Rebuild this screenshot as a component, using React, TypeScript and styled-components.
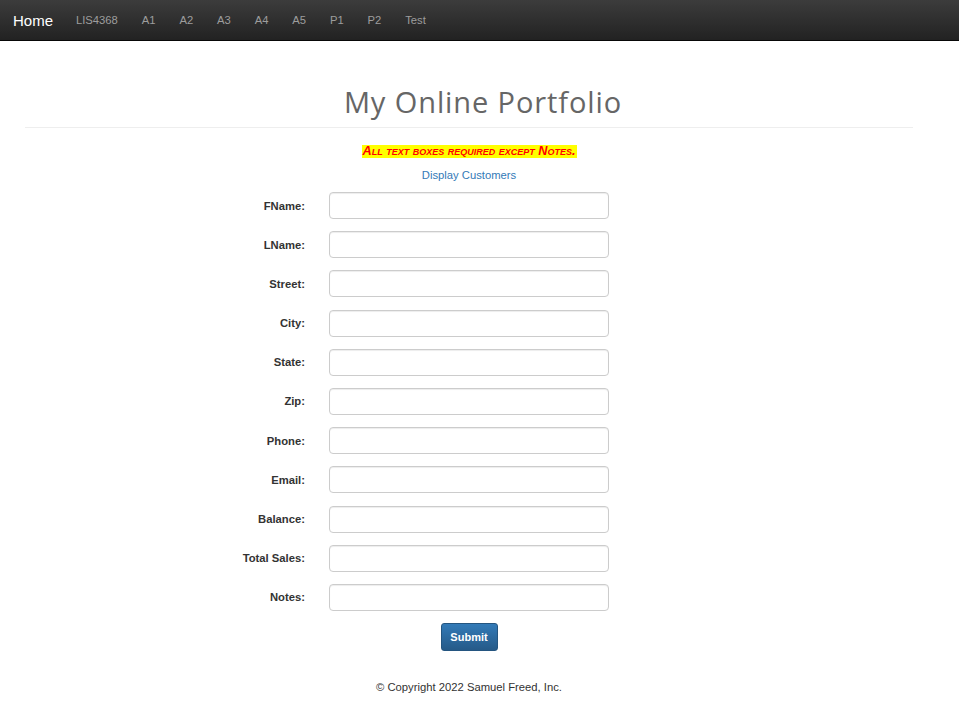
import React from "react";
import styled, { createGlobalStyle } from "styled-components";

const Global = createGlobalStyle`
  html, body { margin: 0; padding: 0; background: #fff; }
  body { font-family: "Liberation Sans", Arial, sans-serif; font-size: 11.25px; color: #333; }
  * { box-sizing: border-box; }
`;

const Navbar = styled.nav`
  height: 41px;
  background: linear-gradient(to bottom, #3c3c3c 0%, #222 100%);
  border-bottom: 1px solid #080808;
  display: flex;
  align-items: center;
  padding-left: 13px;
`;

const Brand = styled.a`
  color: #fff;
  font-size: 15px;
  margin-right: 11px;
  text-decoration: none;
`;

const NavLink = styled.a`
  color: #9d9d9d;
  font-size: 11.25px;
  padding: 0 11.95px;
  text-decoration: none;
`;

const Container = styled.main`
  margin: 0 46px 0 25px;
  display: flex;
  flex-direction: column;
  align-items: center;
`;

const Title = styled.h1`
  font-family: "Open Sans", "DejaVu Sans", sans-serif;
  font-weight: 400;
  font-size: 29px;
  letter-spacing: 0.9px;
  color: #666;
  margin: 41px 0 0 0;
  padding-left: 28px;
  line-height: 40px;
`;

const Rule = styled.hr`
  align-self: stretch;
  border: 0;
  border-top: 1px solid #eee;
  margin: 5px 0 0 0;
`;

const Warning = styled.p`
  margin: 17px 0 0 0;
  background: #ff0;
  color: #f00;
  font-weight: bold;
  font-style: italic;
  font-variant: small-caps;
  font-size: 12.7px;
  line-height: 13px;
  padding: 0 1px;
`;

const LinkText = styled.a`
  margin-top: 10px;
  color: #337ab7;
  font-size: 11.25px;
  text-decoration: none;
  line-height: 14px;
`;

const Form = styled.form`
  align-self: stretch;
  margin-top: 10px;
  display: grid;
  grid-template-columns: 1fr 280px 1fr;
  column-gap: 24px;
  row-gap: 12.2px;
  align-items: center;
`;

const Label = styled.label`
  grid-column: 1;
  justify-self: end;
  font-weight: bold;
  font-size: 11.25px;
  color: #333;
`;

const Input = styled.input`
  grid-column: 2;
  height: 27px;
  width: 280px;
  border: 1px solid #ccc;
  border-radius: 4px;
  box-shadow: inset 0 1px 1px rgba(0, 0, 0, 0.075);
  font-family: inherit;
  padding: 4px 8px;
`;

const ButtonCell = styled.div`
  grid-column: 2;
  display: flex;
  justify-content: center;
`;

const Submit = styled.button`
  width: 57px;
  height: 28px;
  border: 1px solid #245580;
  border-radius: 3px;
  background: linear-gradient(to bottom, #337ab7 0%, #265a88 100%);
  color: #fff;
  font-family: inherit;
  font-weight: bold;
  font-size: 11px;
  padding: 0;
`;

const Footer = styled.footer`
  margin-top: 29px;
  font-size: 11.25px;
  color: #333;
  line-height: 14px;
`;

const fields = [
  "FName",
  "LName",
  "Street",
  "City",
  "State",
  "Zip",
  "Phone",
  "Email",
  "Balance",
  "Total Sales",
  "Notes",
];

const links = ["LIS4368", "A1", "A2", "A3", "A4", "A5", "P1", "P2", "Test"];

export default function App() {
  return (
    <>
      <Global />
      <Navbar>
        <Brand href="#">Home</Brand>
        {links.map((l) => (
          <NavLink key={l} href="#">
            {l}
          </NavLink>
        ))}
      </Navbar>
      <Container>
        <Title>My Online Portfolio</Title>
        <Rule />
        <Warning>All text boxes required except Notes.</Warning>
        <LinkText href="#">Display Customers</LinkText>
        <Form onSubmit={(e) => e.preventDefault()}>
          {fields.map((f) => (
            <React.Fragment key={f}>
              <Label>{f}:</Label>
              <Input type="text" />
            </React.Fragment>
          ))}
          <ButtonCell>
            <Submit type="submit">Submit</Submit>
          </ButtonCell>
        </Form>
        <Footer>© Copyright 2022 Samuel Freed, Inc.</Footer>
      </Container>
    </>
  );
}
